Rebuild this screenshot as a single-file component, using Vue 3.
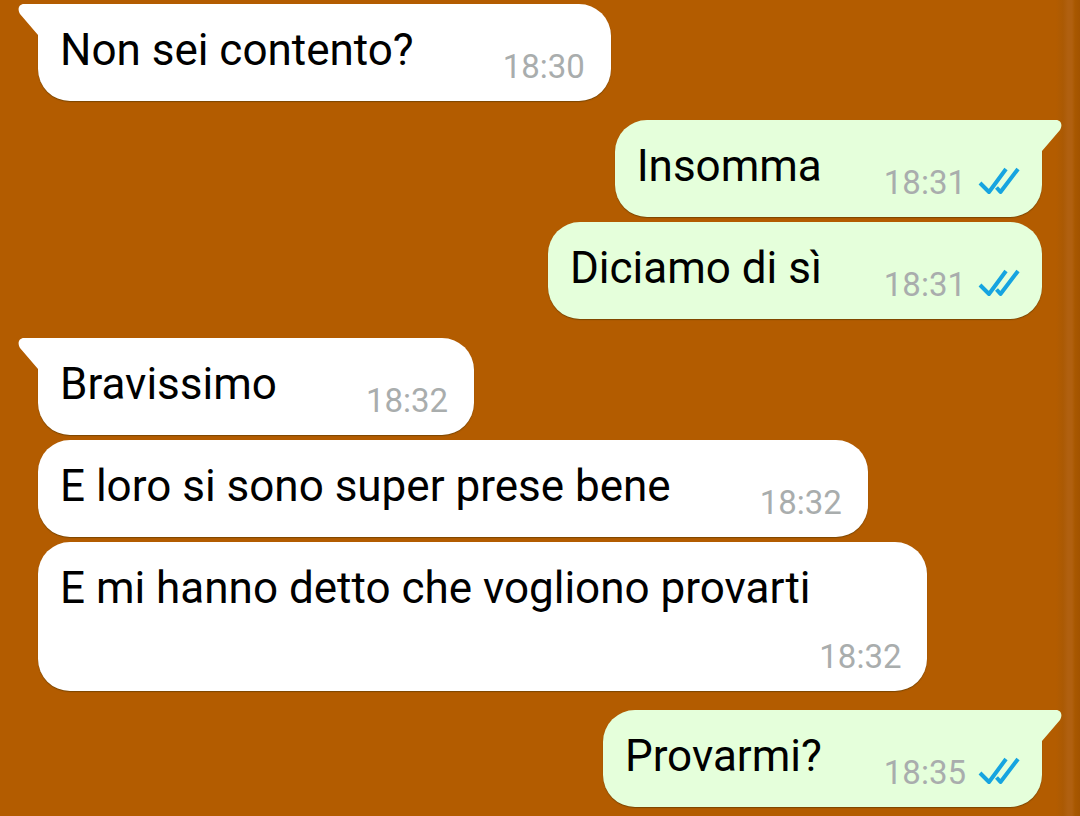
<script setup>
const messages = [
  { text: 'Non sei contento?', time: '18:30', first: true },
  { text: 'Insomma', time: '18:31', sent: true, first: true },
  { text: 'Diciamo di sì', time: '18:31', sent: true },
  { text: 'Bravissimo', time: '18:32', first: true },
  { text: 'E loro si sono super prese bene', time: '18:32' },
  { text: 'E mi hanno detto che vogliono provarti', time: '18:32', tall: true },
  { text: 'Provarmi?', time: '18:35', sent: true, first: true },
]
</script>

<template>
  <main class="chat">
    <article
      v-for="(m, i) in messages"
      :key="i"
      class="bubble"
      :class="{ sent: m.sent, first: m.first, tall: m.tall }"
    >
      <svg v-if="m.first" class="tail" viewBox="0 0 21 32" aria-hidden="true">
        <path d="M21 0H6C1 0 -1 5 2 10L20 31V32H21Z" />
      </svg>
      <p class="text">{{ m.text }}</p>
      <footer class="meta">
        <time>{{ m.time }}</time>
        <svg v-if="m.sent" class="ticks" viewBox="0 0 42 36" role="img" aria-label="Letto">
          <path d="M2 18L11 27L28 4M18.500 22.500L22.500 27L40 4" />
        </svg>
      </footer>
    </article>
  </main>
</template>

<style>
body {
  margin: 0;
  background: #b35c00;
}
</style>

<style scoped>
.chat {
  box-sizing: border-box;
  min-height: 100vh;
  display: flex;
  flex-direction: column;
  align-items: flex-start;
  gap: 5px;
  padding: 4px 38px 9px;
  font-family: Roboto, "Liberation Sans", sans-serif;
  background: linear-gradient(to left, #a25300 0, #a85800 5px, #b06010 8px, #b06010 12px, #ab5a04 17px, #b35c00 24px);
}
.bubble {
  position: relative;
  box-sizing: border-box;
  display: flex;
  min-height: 97px;
  padding: 20px 26px 15px 22px;
  border-radius: 32px;
  color: #000;
  background: #fff;
  box-shadow: 0 1px 1px rgba(70, 50, 0, 0.5);
}
.bubble.first:not(:first-child) {
  margin-top: 14px;
}
.sent {
  align-self: flex-end;
  padding-right: 22px;
  background: #e5ffdb;
}
.first {
  border-top-left-radius: 0;
}
.sent.first {
  border-top-left-radius: 32px;
  border-top-right-radius: 0;
}
.tail {
  position: absolute;
  top: 0;
  left: -20px;
  width: 21px;
  height: 32px;
  fill: #fff;
}
.sent .tail {
  left: auto;
  right: -20px;
  transform: scaleX(-1);
  fill: #e5ffdb;
}
.text {
  margin: 0;
  padding-right: 89px;
  font-size: 44px;
  line-height: 52px;
}
.sent .text {
  padding-right: 62px;
}
.meta {
  display: flex;
  align-items: center;
  align-self: flex-end;
  gap: 12px;
  font-size: 33px;
  line-height: 38px;
  color: #a9adad;
}
.tall {
  flex-direction: column;
  gap: 24px;
}
.tall .text {
  padding-right: 91px;
}
.ticks {
  width: 42px;
  height: 36px;
  fill: none;
  stroke: #16a4e0;
  stroke-width: 4;
  stroke-linejoin: round;
}
</style>
